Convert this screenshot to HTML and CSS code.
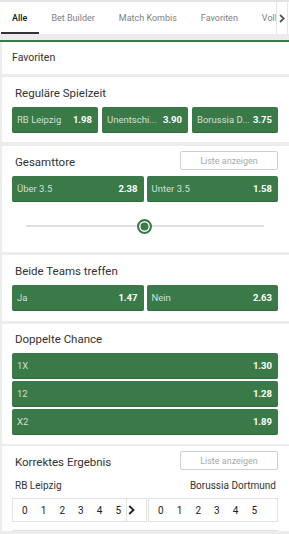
FILE: index.html
```html
<!DOCTYPE html>
<html lang="de">
<head>
<meta charset="utf-8">
<link rel="stylesheet" href="styles.css">
</head>
<body>
<div class="page">
  <nav class="tabs">
    <div class="tab-list">
      <span class="tab active">Alle</span>
      <span class="tab">Bet Builder</span>
      <span class="tab">Match Kombis</span>
      <span class="tab">Favoriten</span>
      <span class="tab">Volltreffer</span>
    </div>
    <div class="tab-more">
      <svg width="6" height="9" viewBox="0 0 6 9"><path d="M1 1 L4.8 4.5 L1 8" fill="none" stroke="#555" stroke-width="1.7"/></svg>
    </div>
  </nav>
  <div class="strip"></div>
  <div class="fav-head">Favoriten</div>

  <section class="card">
    <div class="card-head"><h2>Reguläre Spielzeit</h2></div>
    <div class="row row-3">
      <div class="odd"><span class="lbl">RB Leipzig</span><span class="val">1.98</span></div>
      <div class="odd"><span class="lbl">Unentschi...</span><span class="val">3.90</span></div>
      <div class="odd"><span class="lbl">Borussia D...</span><span class="val">3.75</span></div>
    </div>
  </section>

  <section class="card card-tot">
    <div class="card-head"><h2>Gesamttore</h2><button class="list-btn">Liste anzeigen</button></div>
    <div class="row row-2">
      <div class="odd"><span class="lbl">Über 3.5</span><span class="val">2.38</span></div>
      <div class="odd"><span class="lbl">Unter 3.5</span><span class="val">1.58</span></div>
    </div>
    <div class="slider">
      <div class="track"></div>
      <div class="knob"></div>
    </div>
  </section>

  <section class="card card-bt">
    <div class="card-head"><h2>Beide Teams treffen</h2></div>
    <div class="row row-2">
      <div class="odd"><span class="lbl">Ja</span><span class="val">1.47</span></div>
      <div class="odd"><span class="lbl">Nein</span><span class="val">2.63</span></div>
    </div>
  </section>

  <section class="card card-dc">
    <div class="card-head"><h2>Doppelte Chance</h2></div>
    <div class="col">
      <div class="odd"><span class="lbl">1X</span><span class="val">1.30</span></div>
      <div class="odd"><span class="lbl">12</span><span class="val">1.28</span></div>
      <div class="odd"><span class="lbl">X2</span><span class="val">1.89</span></div>
    </div>
  </section>

  <section class="card card-ce">
    <div class="card-head"><h2>Korrektes Ergebnis</h2><button class="list-btn">Liste anzeigen</button></div>
    <div class="teams"><span>RB Leipzig</span><span>Borussia Dortmund</span></div>
    <div class="scores">
      <div class="score-box first">
        <div class="digits"><span>0</span><span>1</span><span>2</span><span>3</span><span>4</span><span>5</span></div>
        <div class="score-more"><svg width="7" height="10" viewBox="0 0 7 10"><path d="M1.2 1 L5.5 5 L1.2 9" fill="none" stroke="#222" stroke-width="1.8"/></svg></div>
      </div>
      <div class="score-box">
        <div class="digits"><span>0</span><span>1</span><span>2</span><span>3</span><span>4</span><span>5</span></div>
      </div>
    </div>
    <div class="next-line"></div>
  </section>
</div>
</body>
</html>
```

FILE: styles.css
```css
* { box-sizing: border-box; margin: 0; padding: 0; }
html, body { height: 100%; }
body {
  background: #ececec;
  font-family: Roboto, "Liberation Sans", Arial, sans-serif;
  color: #333;
  overflow: hidden;
}
.page { width: 289px; }

.tabs {
  height: 34px;
  background: #fff;
  border-top: 2px solid #e4e4e4;
  display: flex;
}
.tab-list {
  flex: 1;
  min-width: 0;
  display: flex;
  overflow: hidden;
  white-space: nowrap;
}
.tab {
  font-size: 9px;
  color: #808080;
  padding: 0 12px;
  line-height: 32px;
  height: 32px;
  flex: none;
}
.tab.active {
  color: #222;
  font-weight: 500;
  border-bottom: 2px solid #333;
  margin-left: 1px;
  padding-left: 11px;
  padding-right: 12px;
}
.tab-more {
  flex: 0 0 12px;
  border-left: 1px solid #e6e6e6;
  border-right: 1px solid #e6e6e6;
  display: flex;
  align-items: center;
  justify-content: center;
  margin-right: 1px;
  height: 32px;
}
.strip {
  height: 8px;
  background: #ececec;
  border-bottom: 2px solid #3b7a49;
}
.fav-head {
  background: #fff;
  height: 32px;
  font-size: 10.5px;
  line-height: 32px;
  padding-left: 10px;
  color: #333;
  margin-left: 2px;
  margin-bottom: 3px;
}

.card {
  background: #fff;
  margin: 0 0 4px 2px;
  padding: 0 11px 9px 10px;
}
.card-head {
  height: 30px;
  display: flex;
  align-items: center;
  justify-content: space-between;
}
.card-head h2 {
  font-size: 11.5px;
  font-weight: 400;
  color: #333;
  padding-left: 3px;
  padding-top: 1px;
}
.list-btn {
  width: 98px;
  height: 19px;
  border: 1px solid #cfcfcf;
  border-radius: 2px;
  background: #fff;
  font-family: inherit;
  font-size: 9px;
  color: #a9a9a9;
  margin-top: -1px;
}
.row { display: flex; }
.row-3 { gap: 4px; }
.row-2 { gap: 3px; }
.row .odd { flex: 1; min-width: 0; }
.odd {
  height: 26px;
  background: #3a7a49;
  border-radius: 2px;
  border-bottom: 1px solid #2f6a3c;
  display: flex;
  align-items: center;
  justify-content: space-between;
  gap: 2px;
  padding: 0 6px 0 5px;
  font-size: 9.5px;
}
.lbl { color: rgba(255,255,255,0.78); white-space: nowrap; flex: none; }
.val { color: #fff; font-weight: 700; flex: none; }

.card-tot { padding-bottom: 0; margin-bottom: 3px; }
.slider {
  height: 50px;
  position: relative;
}
.track {
  position: absolute;
  left: 14px;
  right: 14px;
  top: 23px;
  height: 2px;
  background: #e0e0e0;
}
.knob {
  position: absolute;
  left: 125px;
  top: 17px;
  width: 15px;
  height: 15px;
  border-radius: 50%;
  border: 2px solid #3a7a49;
  background: #3a7a49;
  box-shadow: inset 0 0 0 1.5px #fff;
}

.card-bt { padding-bottom: 10px; margin-bottom: 3px; }
.card-dc { margin-bottom: 2px; }
.card-dc .card-head { height: 29px; }
.col { display: flex; flex-direction: column; gap: 2px; }

.card-ce { padding-bottom: 0; }
.teams {
  display: flex;
  justify-content: space-between;
  font-size: 10px;
  color: #333;
  height: 18px;
  align-items: center;
  padding: 0 2px 0 3px;
}
.scores {
  display: flex;
  gap: 1px;
  margin-top: 4px;
}
.score-box {
  flex: 1;
  height: 24px;
  border: 1px solid #e2e2e2;
  display: flex;
  align-items: center;
}
.score-box.first { flex: 0 0 135px; }
.digits {
  flex: 1;
  min-width: 0;
  display: flex;
  padding-left: 9px;
  font-size: 10px;
  color: #222;
}
.digits span { width: 18.7px; flex: none; }
.digits span:last-child { width: auto; }
.score-more {
  flex: 0 0 20px;
  height: 100%;
  border-left: 1px solid #e2e2e2;
  display: flex;
  align-items: center;
  padding-left: 1px;
}
.next-line {
  margin-top: 8px;
  height: 1px;
  background: #e2e2e2;
}
```
